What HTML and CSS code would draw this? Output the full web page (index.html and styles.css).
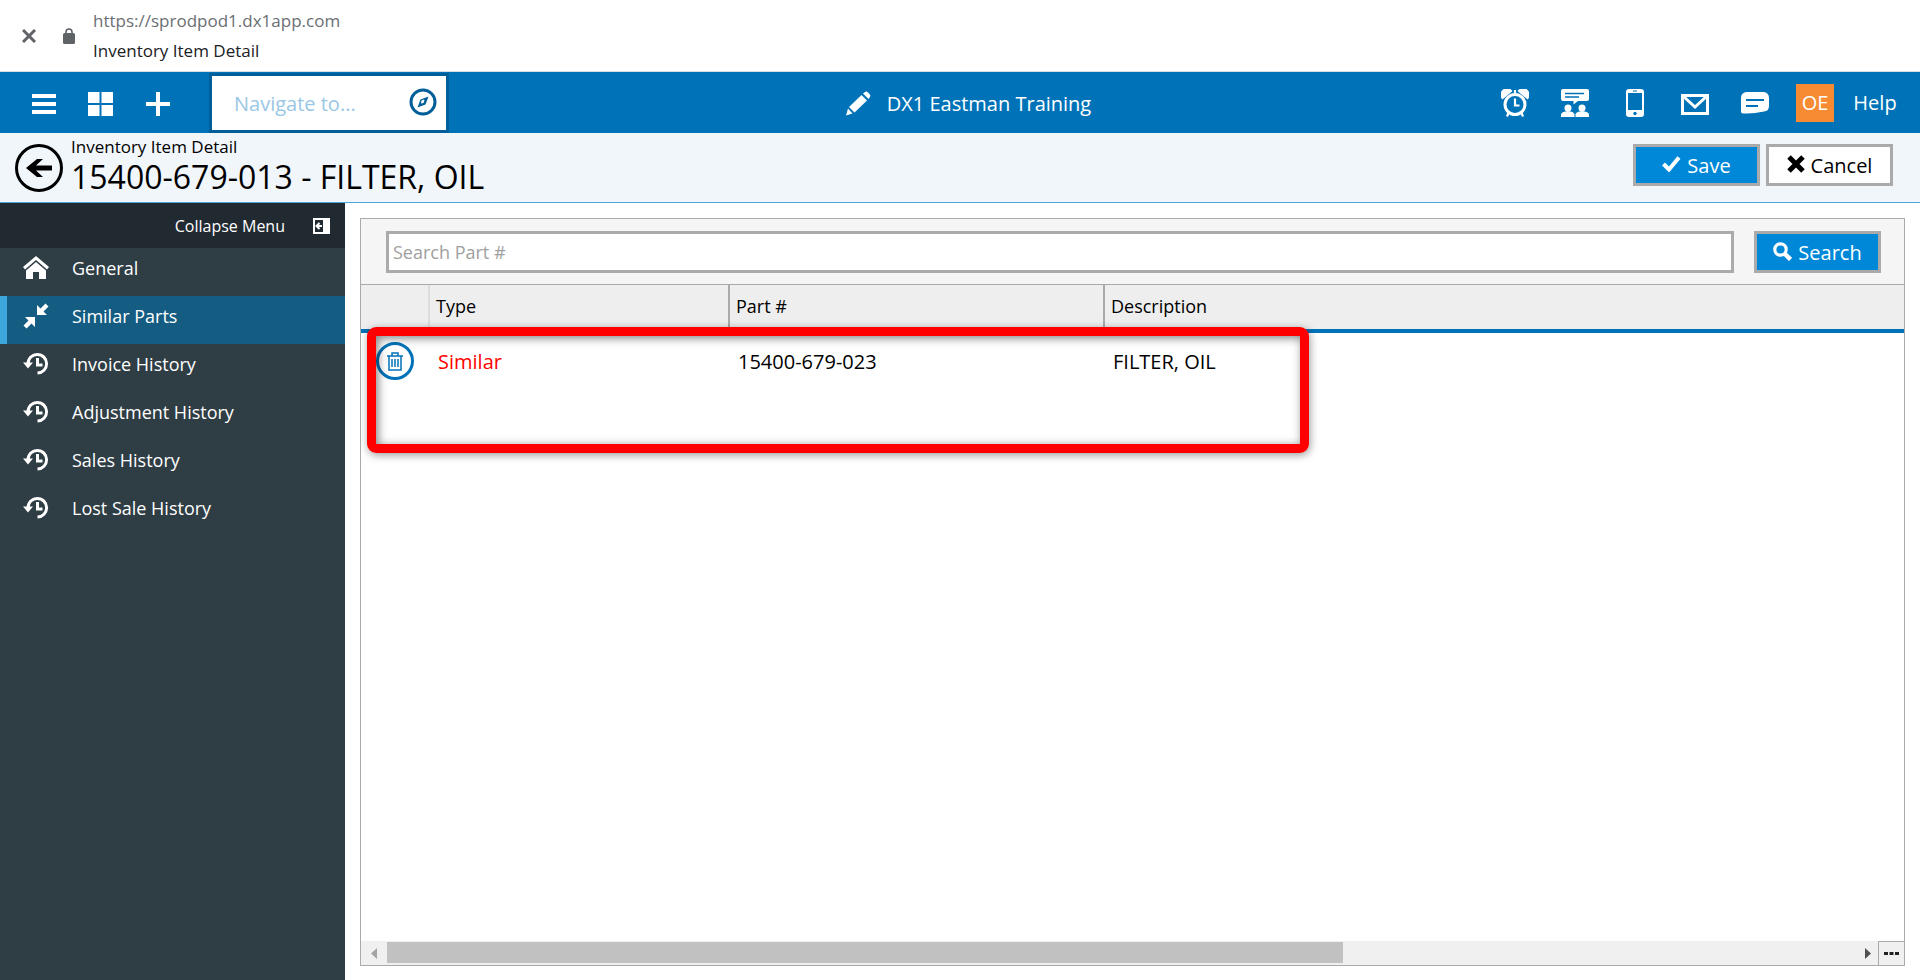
FILE: index.html
```html
<!DOCTYPE html>
<html lang="en">
    <head>
        <meta charset="UTF-8" />
        <meta name="viewport" content="width=device-width, initial-scale=1.0" />
        <title>Inventory Item Detail</title>
        <link rel="stylesheet" href="styles.css">
    </head>
    <body>
        <svg class="sprite" aria-hidden="true">
            <symbol id="history" viewBox="0 0 26 24">
                <path d="M5 11.500A9.300 9.300 0 1 1 14.500 21" fill="none" stroke="currentColor" stroke-width="3" />
                <path d="M0 10.500h10l-5 6z" fill="currentColor" />
                <path d="M14.500 6v7h5" fill="none" stroke="currentColor" stroke-width="3" />
            </symbol>
        </svg>

        <div class="window-bar">
            <button class="window-close" aria-label="Close">
                <svg width="14" height="14" viewBox="0 0 14 14"><path d="M1 1l12 12M13 1L1 13" stroke="#5f6368" stroke-width="3" /></svg>
            </button>
            <svg width="12" height="16" viewBox="0 0 12 16"><rect y="5" width="12" height="11" rx="1.500" fill="#5f6368" /><path d="M3 6V4a3 3 0 0 1 6 0v2" fill="none" stroke="#5f6368" stroke-width="1.600" /></svg>
            <div class="window-text">
                <div class="window-url">https://sprodpod1.dx1app.com</div>
                <div>Inventory Item Detail</div>
            </div>
        </div>

        <nav class="topbar">
            <div class="topbar-left">
                <button class="top-btn" aria-label="Menu">
                    <svg width="24" height="20" viewBox="0 0 24 20"><path d="M0 2h24M0 10h24M0 18h24" stroke="#fff" stroke-width="4" /></svg>
                </button>
                <button class="top-btn" aria-label="Dashboard">
                    <svg width="25" height="24" viewBox="0 0 25 24" fill="#fff"><path d="M0 0h11.500v11H0zM13.500 0H25v11H13.500zM0 13h11.500v11H0zM13.500 13H25v11H13.500z" /></svg>
                </button>
                <button class="top-btn" aria-label="Add">
                    <svg width="24" height="24" viewBox="0 0 24 24"><path d="M12 0v24M0 12h24" stroke="#fff" stroke-width="4" /></svg>
                </button>
                <div class="navigate">
                    <input class="navigate-input" type="text" placeholder="Navigate to..." aria-label="Navigate to" />
                    <button class="navigate-go" aria-label="Go">
                        <svg width="28" height="28" viewBox="0 0 28 28"><circle cx="14" cy="14" r="12" fill="none" stroke="#005e98" stroke-width="3" /><path d="M19.500 8.500l-3 8-8 3 3-8z" fill="#005e98" /><path d="M14.500 11.500l-2 1-0.500 3 2.500-0.500 1-2.500z" fill="#fff" /></svg>
                    </button>
                </div>
            </div>
            <div class="topbar-title">
                <svg width="26" height="25" viewBox="0 0 26 25" fill="#fff"><path d="M4 16L16.500 4l5.500 5.500L9.500 21.500zM18 2.500L20 1q1.500-1 3 .5l1.500 1.500q1.500 1.500.5 3l-1.500 2zM3 17.500L7.500 22.500 1 24.500z" /></svg>
                <span>DX1 Eastman Training</span>
            </div>
            <div class="topbar-right">
                <a class="top-link" href="#" aria-label="Reminders">
                    <svg width="28" height="28" viewBox="0 0 28 28"><path d="M1.500 9.500A5.500 5.500 0 0 1 10.500 2zM26.500 9.500A5.500 5.500 0 0 0 17.500 2z" fill="#fff" stroke="#fff" stroke-width="1.500" stroke-linejoin="round" /><circle cx="14" cy="15.500" r="10" fill="#0073b8" stroke="#fff" stroke-width="3" /><path d="M14 9.500v7h4.500M14 1v4M7.500 24L6 27.500M20.500 24l1.500 3.500" fill="none" stroke="#fff" stroke-width="2.200" /></svg>
                </a>
                <a class="top-link" href="#" aria-label="Meetings">
                    <svg width="28" height="28" viewBox="0 0 28 28" fill="#fff"><path d="M2 0h24q2 0 2 2v8q0 2-2 2H17l-4.500 3.500V12H2q-2 0-2-2V2q0-2 2-2z" /><path d="M4 4.500h19M4 8h14" stroke="#0073b8" stroke-width="1.500" /><circle cx="7" cy="19" r="3.500" /><circle cx="21" cy="19" r="3.500" /><path d="M0 28v-3q1-2.500 7-3 5.500.5 6.500 3v3zM14.500 28v-3q1-2.500 6.500-3 6 .5 7 3v3z" /></svg>
                </a>
                <a class="top-link" href="#" aria-label="Mobile">
                    <svg width="18" height="28" viewBox="0 0 18 28"><rect width="18" height="28" rx="3" fill="#fff" /><path d="M2 4h14v17H2z" fill="#0073b8" /><circle cx="9" cy="24.500" r="1.700" fill="#0073b8" /><path d="M7 2h4" stroke="#0073b8" /></svg>
                </a>
                <a class="top-link mail" href="#" aria-label="Mail">
                    <svg width="28" height="21" viewBox="0 0 28 21" fill="none" stroke="#fff" stroke-width="3"><path d="M1.500 1.500h25v18h-25zM2 2l12 11L26 2" /></svg>
                </a>
                <a class="top-link" href="#" aria-label="Messages">
                    <svg width="28" height="22" viewBox="0 0 28 22"><path d="M5 0h18q5 1 5 6v8q0 5-5 5.500Q12 22 2 21.500q-2 0-2-2V6q0-5 5-6z" fill="#fff" /><path d="M5 8h18M5 14h12" stroke="#0073b8" stroke-width="2" /></svg>
                </a>
                <a class="top-link" href="#"><span class="avatar">OE</span></a>
                <a class="top-link" href="#">Help</a>
            </div>
        </nav>

        <header class="page-header">
            <button class="back" aria-label="Back">
                <svg width="48" height="48" viewBox="0 0 48 48"><circle cx="24" cy="24" r="22.500" fill="none" stroke="#000" stroke-width="3" /><path d="M11 24l11-9h6l-7 6.500h16v5H21l7 6.500h-6z" /></svg>
            </button>
            <div class="page-title">
                <div class="page-kind">Inventory Item Detail</div>
                <h1>15400-679-013 - FILTER, OIL</h1>
            </div>
            <div class="page-actions">
                <button class="btn btn-primary">
                    <svg width="19" height="16" viewBox="0 0 19 16"><path d="M1.500 8l5.500 5.500L17 1.500" fill="none" stroke="#fff" stroke-width="4" /></svg>
                    Save
                </button>
                <button class="btn">
                    <svg width="18" height="18" viewBox="0 0 18 18"><path d="M2 2l14 14M16 2L2 16" stroke="#000" stroke-width="5" /></svg>
                    Cancel
                </button>
            </div>
        </header>

        <div class="layout">
            <aside class="sidebar">
                <button class="collapse">
                    Collapse Menu
                    <svg width="17" height="16" viewBox="0 0 17 16"><path d="M1 1h15v14H1z" fill="none" stroke="#fff" stroke-width="2" /><path d="M10 2h5v12h-5z" fill="#fff" /><path d="M9 8H4M6.500 5L3.500 8l3 3" fill="none" stroke="#fff" stroke-width="2" /></svg>
                </button>
                <a class="side-link" href="#">
                    <svg width="26" height="24" viewBox="0 0 26 24" fill="#fff"><path d="M13 0l13 11-2 2.500L13 4 2 13.500 0 11z" /><path d="M13 6l10 8.500V23h-7v-7h-6v7H3v-8.500z" /></svg>
                    General
                </a>
                <a class="side-link active" href="#">
                    <svg width="26" height="26" viewBox="0 0 26 26" fill="#fff"><path d="M14 2l3.500 3.500L22.500.5l3 3-5 5L24 12H14zM2 14h10v10l-3.500-3.500-5 5-3-3 5-5z" /></svg>
                    Similar Parts
                </a>
                <a class="side-link" href="#"><svg width="26" height="24"><use href="#history" /></svg>Invoice History</a>
                <a class="side-link" href="#"><svg width="26" height="24"><use href="#history" /></svg>Adjustment History</a>
                <a class="side-link" href="#"><svg width="26" height="24"><use href="#history" /></svg>Sales History</a>
                <a class="side-link" href="#"><svg width="26" height="24"><use href="#history" /></svg>Lost Sale History</a>
            </aside>

            <main class="content">
                <section class="panel">
                    <div class="search-row">
                        <input class="search-input" type="text" placeholder="Search Part #" aria-label="Search Part #" />
                        <button class="btn btn-primary">
                            <svg width="19" height="19" viewBox="0 0 19 19" fill="none" stroke="#fff"><circle cx="7.500" cy="7.500" r="5.700" stroke-width="3.200" /><path d="M11.500 11.500l6 6" stroke-width="4.500" /></svg>
                            Search
                        </button>
                    </div>
                    <div class="grid-wrap">
                        <table class="grid">
                            <colgroup>
                                <col class="col-action" />
                                <col class="col-type" />
                                <col class="col-part" />
                                <col />
                            </colgroup>
                            <thead>
                                <tr>
                                    <th></th>
                                    <th>Type</th>
                                    <th>Part #</th>
                                    <th>Description</th>
                                </tr>
                            </thead>
                            <tbody>
                                <tr>
                                    <td>
                                        <button class="delete" aria-label="Delete">
                                            <svg width="16" height="19" viewBox="0 0 16 19" fill="none" stroke="#0073b8" stroke-width="1.500"><path d="M0 4h16M5 4V1h6v3M2 4v14h12V4M5 7v8M8 7v8M11 7v8" /></svg>
                                        </button>
                                    </td>
                                    <td class="type">Similar</td>
                                    <td>15400-679-023</td>
                                    <td>FILTER, OIL</td>
                                </tr>
                            </tbody>
                        </table>
                        <div class="highlight"></div>
                    </div>
                    <div class="scroll-row">
                        <button class="scroll-prev" aria-label="Scroll left"><svg width="6" height="11" viewBox="0 0 6 11"><path d="M6 0v11L0 5.500z" fill="#a3a3a3" /></svg></button>
                        <div class="scroll-track"><div class="scroll-thumb"></div></div>
                        <button class="scroll-next" aria-label="Scroll right"><svg width="6" height="11" viewBox="0 0 6 11"><path d="M0 0v11l6-5.500z" fill="#505050" /></svg></button>
                        <button class="more" aria-label="More"><svg width="15" height="3" viewBox="0 0 15 3"><path d="M0 0h4v3H0zM5.500 0h4v3h-4zM11 0h4v3h-4z" fill="#222" /></svg></button>
                    </div>
                </section>
            </main>
        </div>
    </body>
</html>
```
FILE: styles.css
```css
* {
    box-sizing: border-box;
}
body {
    display: flex;
    flex-direction: column;
    min-height: 100vh;
    margin: 0;
    font-family: "Segoe UI", "Open Sans", "Noto Sans", sans-serif;
    font-size: 18px;
    color: #000;
    background: #fff;
}
button {
    display: flex;
    align-items: center;
    justify-content: center;
    padding: 0;
    border: none;
    background: none;
    font: inherit;
    color: inherit;
    cursor: pointer;
}
input {
    font: inherit;
}
a {
    color: inherit;
    text-decoration: none;
}
svg {
    flex: none;
}
.sprite {
    position: absolute;
    width: 0;
    height: 0;
}

.window-bar {
    display: flex;
    align-items: center;
    height: 72px;
    padding-left: 22px;
    border-bottom: 1px solid #d5dde2;
}
.window-close {
    margin-right: 27px;
}
.window-text {
    margin-left: 18px;
    font-size: 17px;
    line-height: 30px;
    color: #202124;
}
.window-url {
    color: #6b6e72;
}

.topbar {
    display: grid;
    grid-template-columns: 1fr auto 1fr;
    height: 61px;
    padding-left: 16px;
    color: #fff;
    background: #0073b8;
}
.topbar-left,
.topbar-title,
.topbar-right {
    display: flex;
    align-items: center;
}
.topbar-right {
    justify-content: flex-end;
    padding-right: 15px;
}
.topbar-title {
    gap: 16px;
    padding-top: 2px;
    font-size: 20px;
}
.top-btn {
    width: 57px;
    height: 61px;
    padding: 3px 2px 0 0;
}
.navigate {
    display: flex;
    align-items: center;
    width: 240px;
    height: 60px;
    margin-left: 22px;
    padding: 0 9px 0 22px;
    border: 3px solid #005e98;
    background: #fff;
}
.navigate-input {
    flex: 1;
    min-width: 0;
    padding: 2px 0 0;
    border: none;
    outline: none;
    font-size: 20px;
}
.navigate-input::placeholder {
    color: #99c7e6;
}
.navigate-go {
    padding-bottom: 2px;
}
.top-link {
    display: flex;
    align-items: center;
    justify-content: center;
    width: 60px;
    font-size: 20px;
}
.mail {
    padding-top: 3px;
}
.avatar {
    width: 38px;
    height: 38px;
    line-height: 38px;
    text-align: center;
    background: #f68b33;
}

.page-header {
    display: flex;
    align-items: center;
    height: 70px;
    padding: 0 27px 0 15px;
    border-bottom: 1px solid #4aa5da;
    background: #f1f6fa;
}
.page-title {
    flex: 1;
    margin-left: 8px;
    padding-bottom: 6px;
}
.page-kind {
    font-size: 17px;
    line-height: 24px;
}
h1 {
    margin: 0;
    font-size: 32px;
    font-weight: 400;
    line-height: 36px;
}
.page-actions {
    display: flex;
    gap: 6px;
    padding-bottom: 6px;
}
.btn {
    gap: 6px;
    min-width: 127px;
    height: 42px;
    padding-top: 2px;
    border: 3px solid #aaa;
    background: #fff;
    font-size: 20px;
}
.btn svg {
    margin-bottom: 3px;
}
.btn-primary {
    color: #fff;
    background: #0088d8;
}

.layout {
    display: flex;
    flex: 1;
}
.sidebar {
    width: 345px;
    color: #fff;
    background: #2f3d44;
}
.collapse {
    justify-content: flex-end;
    gap: 28px;
    width: 100%;
    height: 45px;
    padding-right: 15px;
    background: #222a31;
    font-size: 16px;
}
.side-link {
    display: flex;
    align-items: center;
    gap: 23px;
    height: 48px;
    padding: 0 0 8px 23px;
}
.side-link.active {
    padding-left: 16px;
    border-left: 7px solid #3ba7dc;
    background: #145c82;
}

.content {
    display: flex;
    flex: 1;
    padding: 15px 15px 14px;
}
.panel {
    display: flex;
    flex: 1;
    flex-direction: column;
    border: 1px solid #aaa;
}
.search-row {
    display: flex;
    align-items: center;
    gap: 20px;
    height: 66px;
    padding: 0 23px 0 25px;
    border-bottom: 1px solid #aaa;
    background: #f5f5f5;
}
.search-input {
    flex: 1;
    height: 42px;
    padding: 0 4px;
    border: 3px solid #aaa;
}
.search-input::placeholder {
    color: #a0a0a0;
}

.grid-wrap {
    position: relative;
    flex: 1;
}
.grid {
    width: 100%;
    table-layout: fixed;
    border-collapse: separate;
    border-spacing: 0;
}
.col-action {
    width: 69px;
}
.col-type {
    width: 300px;
}
.col-part {
    width: 375px;
}
th {
    height: 48px;
    padding: 0 6px 2px;
    border-right: 2px solid #aaa;
    border-bottom: 4px solid #0073b8;
    background: #eee;
    font-weight: 400;
    text-align: left;
}
th:first-child {
    border-right-color: #ddd;
}
th:last-child {
    border-right: none;
}
td {
    height: 56px;
    padding: 0 8px;
    font-size: 20px;
}
td:first-child {
    padding: 0 15px;
}
.type {
    color: #f00;
}
.delete {
    width: 38px;
    height: 38px;
    border: 3px solid #0073b8;
    border-radius: 50%;
}
/* marks the matching parts, drawn over the grid */
.highlight {
    position: absolute;
    top: 42px;
    left: 6px;
    width: 942px;
    height: 126px;
    border: 9px solid #f00;
    border-radius: 9px;
    box-shadow: 1px 2px 8px rgba(0, 0, 0, 0.4), inset 2px 2px 10px rgba(0, 0, 0, 0.5);
    pointer-events: none;
}

.scroll-row {
    display: flex;
    height: 24px;
    background: #f0f0f0;
}
.scroll-prev {
    width: 26px;
}
.scroll-next {
    width: 20px;
}
.scroll-track {
    flex: 1;
    padding: 1px 0 2px;
}
.scroll-thumb {
    width: 65%;
    height: 21px;
    background: #c1c1c1;
}
.more {
    width: 26px;
    border-top: 1px solid #aaa;
    border-left: 1px solid #aaa;
}
```
